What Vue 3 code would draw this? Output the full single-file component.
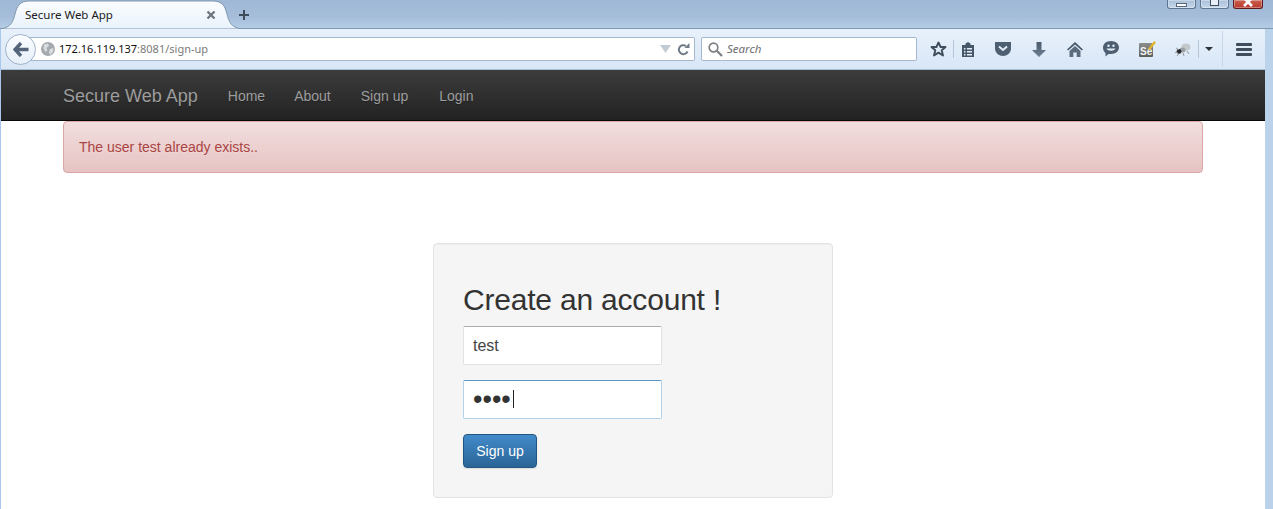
<script setup>
const links = ['Home', 'About', 'Sign up', 'Login']
</script>

<template>
  <div class="window">
    <header class="titlebar">
      <div class="tab">
        <svg class="tab-shape" width="240" height="29" viewBox="0 0 240 29">
          <defs>
            <linearGradient id="tabfill" x1="0" y1="0" x2="0" y2="1">
              <stop offset="0" stop-color="#fbfdff" />
              <stop offset="1" stop-color="#e9f2fb" />
            </linearGradient>
          </defs>
          <path d="M0 29 C10 27 12 22 14 14 C16 6 19 1 28 1 L212 1 C221 1 224 6 226 14 C228 22 230 27 240 29 Z" fill="url(#tabfill)" stroke="#7f97b0" stroke-width="1" />
        </svg>
        <span class="tab-title">Secure Web App</span>
        <svg class="tab-close" width="10" height="10" viewBox="0 0 10 10"><path d="M1.5 1.5 8.5 8.5M8.5 1.5 1.5 8.5" stroke="#6d7680" stroke-width="2.4" /></svg>
      </div>
      <svg class="new-tab" width="12" height="12" viewBox="0 0 12 12"><path d="M6 1V11M1 6H11" stroke="#3f4c5a" stroke-width="2" /></svg>
      <div class="win-controls">
        <div class="win-btn min"><i></i></div>
        <div class="win-btn max"><i></i></div>
        <div class="win-btn close"><svg width="12" height="8" viewBox="0 0 12 8"><path d="M2 -2 10 6M10 -2 2 6" stroke="#fff" stroke-width="2.6" /></svg></div>
      </div>
    </header>

    <div class="below">
      <div class="frame-left"></div>
      <div class="main">
        <div class="toolbar">
          <div class="back">
            <svg width="16" height="15" viewBox="0 0 16 15"><path d="M8 1 2 7.5 8 14M3 7.5H15.5" fill="none" stroke="#54657a" stroke-width="3.4" /></svg>
          </div>
          <div class="urlbar">
            <svg class="globe" width="14" height="14" viewBox="0 0 14 14">
              <circle cx="7" cy="7" r="7" fill="#a3a9ae" />
              <path d="M3 2.5 7 1.5 8 4 5.5 6 6.5 8.5 4.5 10 2.5 6.5ZM9 7l3.5-1-.5 4-3 3-1-3Z" fill="#d8dcdf" />
            </svg>
            <span class="url"><span class="host">172.16.119.137</span>:8081/sign-up</span>
            <svg class="drop" width="11" height="8" viewBox="0 0 11 8"><path d="M0 0H11L5.5 8Z" fill="#c3ccd5" /></svg>
            <svg class="reload" width="13" height="13" viewBox="0 0 13 13">
              <path d="M10.5 8.5A4.5 4.5 0 1 1 9 3" fill="none" stroke="#6f7a86" stroke-width="2" />
              <path d="M7.5 5H12.5V0Z" fill="#6f7a86" />
            </svg>
          </div>
          <div class="searchbar">
            <svg width="15" height="15" viewBox="0 0 15 15"><circle cx="5.5" cy="5.5" r="4.3" fill="none" stroke="#7d8084" stroke-width="1.7" /><path d="M8.8 8.8 14 14" stroke="#7d8084" stroke-width="2.2" /></svg>
            <span>Search</span>
          </div>

          <div class="slot star">
            <svg width="17" height="16" viewBox="0 0 17 16"><path d="M8.5 1.5 10.6 6H15.5L11.7 9.2 13 14.5 8.5 11.6 4 14.5 5.3 9.2 1.5 6H6.4Z" fill="none" stroke="#3f4d5c" stroke-width="1.9" stroke-linejoin="round" /></svg>
          </div>
          <div class="sep"></div>
          <div class="slot clip">
            <svg width="14" height="15" viewBox="0 0 14 15">
              <path d="M1 3H4.5V1.5L7 0 9.5 1.5V3H13V15H1Z" fill="#46576a" />
              <path d="M3 6H4.5V7.5H3ZM6 6H11V7.5H6ZM3 9H4.5V10.5H3ZM6 9H11V10.5H6ZM3 12H4.5V13.5H3ZM6 12H11V13.5H6Z" fill="#e4eef9" />
            </svg>
          </div>
          <div class="slot">
            <svg width="16" height="14" viewBox="0 0 16 14">
              <path d="M0 0H16V6.5C16 11 12 14 8 14S0 11 0 6.5Z" fill="#4e5f72" />
              <path d="M4 4.5 8 8 12 4.5" fill="none" stroke="#e4eef9" stroke-width="2" />
            </svg>
          </div>
          <div class="slot">
            <svg width="14" height="15" viewBox="0 0 14 15">
              <defs><linearGradient id="downfill" x1="0" y1="0" x2="0" y2="1"><stop offset="0" stop-color="#4a5a6c" /><stop offset="1" stop-color="#6f8094" /></linearGradient></defs>
              <path d="M4.5 0H9.5V8H14L7 15 0 8H4.5Z" fill="url(#downfill)" />
            </svg>
          </div>
          <div class="slot">
            <svg width="16" height="15" viewBox="0 0 16 15">
              <path d="M8 0 16 7.5 14.8 8.6 8 2.5 1.2 8.6 0 7.5Z" fill="#46576a" />
              <path d="M8 4 13.5 9V15H9.7V10.5H6.3V15H2.5V9Z" fill="#5a6b7e" />
            </svg>
          </div>
          <div class="slot">
            <svg width="16" height="16" viewBox="0 0 16 16">
              <path d="M8 0C12.5 0 16 2.8 16 6.5S12.5 13 8 13H5.5L2.5 15.5V12C1 11 0 9 0 6.5 0 2.8 3.5 0 8 0Z" fill="#4e5f72" />
              <circle cx="5.5" cy="4.8" r="1.2" fill="#e4eef9" /><circle cx="10.5" cy="4.8" r="1.2" fill="#e4eef9" />
              <path d="M3.5 7.5C5 10.5 11 10.5 12.5 7.5Z" fill="#e4eef9" />
            </svg>
          </div>
          <div class="slot">
            <svg width="17" height="16" viewBox="0 0 17 16">
              <defs><linearGradient id="sefill" x1="0" y1="0" x2="0" y2="1"><stop offset="0" stop-color="#8d8f8c" /><stop offset="1" stop-color="#5c5e5c" /></linearGradient></defs>
              <rect x="0" y="2" width="14" height="14" rx="1" fill="url(#sefill)" />
              <text x="1" y="14" font-family="Liberation Sans, sans-serif" font-size="10" font-weight="700" fill="#f4f4f4">Se</text>
              <path d="M9 8 15 0 17 1.5 11 9Z" fill="#e3b52d" />
            </svg>
          </div>
          <div class="slot bug">
            <svg width="16" height="13" viewBox="0 0 16 13">
              <ellipse cx="11" cy="4" rx="4.5" ry="3.5" fill="#c4c8cc" />
              <ellipse cx="7.5" cy="7" rx="3" ry="2.5" fill="#9aa0a5" />
              <circle cx="4" cy="8.5" r="2.4" fill="#26282a" />
              <path d="M1 5 4 7M0 9.5H3M2 13 4.5 10M8 10 9 13M12 8 14 11" stroke="#8b9196" stroke-width=".9" />
            </svg>
          </div>
          <div class="sep tall"></div>
          <div class="slot caret"><i></i></div>
          <div class="sep full"></div>
          <div class="slot menu"><i></i><i></i><i></i></div>
        </div>

        <nav class="navbar">
          <a class="brand">Secure Web App</a>
          <a v-for="link in links" :key="link" class="nav-link">{{ link }}</a>
        </nav>

        <div class="content">
          <div class="alert">The user test already exists..</div>
          <form class="card" @submit.prevent>
            <h2>Create an account !</h2>
            <input class="field" type="text" value="test" />
            <div class="pw-wrap">
              <input class="field focus" type="password" value="test" />
              <span class="text-caret"></span>
            </div>
            <button class="submit" type="submit">Sign up</button>
          </form>
        </div>
      </div>
      <div class="frame-right"></div>
    </div>
  </div>
</template>

<style>
html, body { margin: 0; overflow: hidden; }
</style>

<style scoped>
.window {
  width: 1273px;
  height: 509px;
  overflow: hidden;
  display: flex;
  flex-direction: column;
  font-family: "Liberation Sans", Arial, sans-serif;
  background: #fff;
}

/* Title bar */
.titlebar {
  height: 28px;
  flex: none;
  display: flex;
  align-items: flex-start;
  background: linear-gradient(#9eb8d5, #a5bdd9 60%, #b4cce4);
  border-bottom: 1px solid #7f97b0;
  position: relative;
}
.tab {
  position: relative;
  width: 240px;
  height: 28px;
  margin-left: 1px;
  flex: none;
  z-index: 1;
}
.tab-shape { position: absolute; left: 0; top: 0; }
.tab-title {
  position: absolute;
  left: 24px;
  top: 7px;
  font: 11.5px/16px "Noto Sans", sans-serif;
  color: #1c1c1c;
}
.tab-close { position: absolute; left: 205px; top: 10px; }
.new-tab { margin: 9px 0 0 -3px; z-index: 1; }
.win-controls {
  margin-left: auto;
  margin-right: 10px;
  display: flex;
  gap: 4px;
}
.win-btn {
  height: 9px;
  width: 29px;
  box-sizing: border-box;
  border: 1px solid #5f7590;
  border-top: 0;
  border-radius: 0 0 3px 3px;
  background: linear-gradient(#a9c0da, #c4d6e9);
  box-shadow: inset 0 0 0 1px rgba(255,255,255,.35);
  display: flex;
  justify-content: center;
}
.win-btn.close {
  width: 30px;
  border-color: #5d1a1a;
  background: linear-gradient(#c9604f, #b9392c);
  overflow: hidden;
}
.win-btn.min i {
  width: 9px;
  margin-top: 3px;
  background: #fff;
  border: 1px solid #55677c;
  height: 2px;
}
.win-btn.max i {
  width: 7px;
  height: 5px;
  background: #e8eef5;
  border: 1px solid #3f4d5c;
  border-top: 0;
}

/* Below title */
.below { flex: 1; display: flex; min-height: 0; }
.frame-left { width: 1px; background: #a9c9ec; flex: none; }
.frame-right { width: 8px; background: #bad2ea; flex: none; }
.main { width: 1264px; flex: none; display: flex; flex-direction: column; min-height: 0; }

/* Toolbar */
.toolbar {
  height: 40px;
  flex: none;
  display: flex;
  align-items: center;
  padding-left: 4px;
  background: linear-gradient(#e8f1fb, #d8e6f6);
  border-bottom: 1px solid #a9bfd6;
}
.back {
  width: 29px;
  height: 29px;
  border-radius: 50%;
  border: 1px solid #9fb2c7;
  background: linear-gradient(#fbfdff, #e6eff9);
  display: flex;
  align-items: center;
  justify-content: center;
  flex: none;
  z-index: 1;
  margin-right: -13px;
}
.urlbar {
  width: 672px;
  height: 24px;
  box-sizing: border-box;
  border: 1px solid #a6b8cc;
  border-left: 0;
  border-radius: 0 2px 2px 0;
  background: #fff;
  display: flex;
  align-items: center;
  padding-left: 18px;
  flex: none;
}
.globe { flex: none; }
.url {
  margin-left: 4px;
  font: 11px/16px "Noto Sans", sans-serif;
  color: #7a7a7a;
}
.host { color: #111; }
.drop { margin-left: auto; }
.reload { margin: 0 4px 0 6px; }
.searchbar {
  width: 216px;
  height: 24px;
  box-sizing: border-box;
  margin-left: 6px;
  border: 1px solid #a6b8cc;
  border-radius: 2px;
  background: #fff;
  display: flex;
  align-items: center;
  padding-left: 6px;
  gap: 4px;
  font: italic 11.5px/16px "Noto Sans", sans-serif;
  color: #6d6d6d;
  flex: none;
}
.slot {
  width: 36px;
  height: 24px;
  flex: none;
  display: flex;
  align-items: center;
  justify-content: center;
}
.slot.star { width: 30px; margin-left: 6px; }
.slot.clip { width: 31px; padding-right: 3px; box-sizing: border-box; }
.slot.bug { width: 33px; padding-left: 3px; box-sizing: border-box; }
.slot.caret { width: 23px; padding-right: 4px; box-sizing: border-box; }
.slot.caret i {
  width: 0;
  height: 0;
  border-left: 4px solid transparent;
  border-right: 4px solid transparent;
  border-top: 4px solid #2c3238;
}
.slot.menu {
  width: 42px;
  flex-direction: column;
  gap: 2px;
}
.slot.menu i {
  width: 16px;
  height: 3px;
  background: #3f4d5c;
  border-radius: 1px;
}
.sep { width: 1px; height: 18px; background: #b5c6d8; flex: none; }
.sep.tall { height: 18px; }
.sep.full { height: 36px; background: #c9d8e8; }

/* Navbar */
.navbar {
  height: 48px;
  padding-top: 2px;
  flex: none;
  display: flex;
  align-items: center;
  padding-left: 62px;
  background: linear-gradient(#3c3c3c, #222);
  border-bottom: 1px solid #080808;
}
.brand {
  font-size: 18px;
  line-height: 20px;
  color: #9d9d9d;
  margin-right: 15px;
  text-shadow: 0 1px 0 rgba(0,0,0,.25);
}
.nav-link {
  font-size: 14px;
  line-height: 20px;
  color: #9d9d9d;
  padding: 0 15px;
  text-shadow: 0 1px 0 rgba(0,0,0,.25);
}
.nav-link:nth-of-type(2) { margin-right: -1px; }
.nav-link:nth-of-type(4) { margin-right: 1px; }

/* Content */
.content { flex: 1; padding: 0 0 0 62px; min-height: 0; }
.alert {
  width: 1140px;
  height: 52px;
  box-sizing: border-box;
  padding: 15px;
  font-size: 14px;
  line-height: 20px;
  color: #a94442;
  text-shadow: 0 1px 0 rgba(255,255,255,.2);
  background: linear-gradient(#f2dede, #e7c3c3);
  border: 1px solid #dca7a7;
  border-radius: 4px;
}
.card {
  width: 400px;
  height: 255px;
  box-sizing: border-box;
  margin: 70px 0 0 370px;
  padding: 39px 29px 0;
  background: #f5f5f5;
  border: 1px solid #e3e3e3;
  border-radius: 4px;
  box-shadow: inset 0 1px 1px rgba(0,0,0,.03);
  display: flex;
  flex-direction: column;
  align-items: flex-start;
}
h2 {
  margin: 0 0 10px;
  font-size: 30px;
  line-height: 33px;
  font-weight: 500;
  letter-spacing: -0.2px;
  color: #333;
}
.field {
  width: 199px;
  height: 39px;
  box-sizing: border-box;
  padding: 0 9px;
  border: 1px solid #e2e2e2;
  border-top-color: #ababab;
  border-radius: 2px;
  background: #fff;
  font: 16px "Liberation Sans", Arial, sans-serif;
  color: #444;
  outline: none;
}
.pw-wrap { position: relative; margin-top: 15px; height: 39px; }
.field.focus {
  border: 1px solid #b0d2eb;
  border-top-color: #5a96c8;
  font-size: 27px;
  color: #333;
}
.text-caret {
  position: absolute;
  left: 50px;
  top: 10px;
  width: 1px;
  height: 18px;
  background: #222;
}
.submit {
  margin-top: 15px;
  width: 74px;
  height: 34px;
  border: 1px solid #245580;
  border-radius: 4px;
  background: linear-gradient(#428bca, #2a6496);
  color: #fff;
  font: 14px/20px "Liberation Sans", Arial, sans-serif;
  padding: 0;
  box-shadow: 0 1px 2px rgba(0,0,0,.1);
}
</style>
